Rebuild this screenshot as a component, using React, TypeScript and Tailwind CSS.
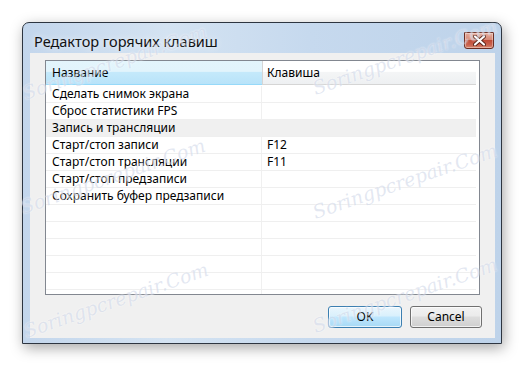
import React from 'react';

type Row = { name: string; key?: string; group?: boolean };

const rows: Row[] = [
  { name: 'Сделать снимок экрана' },
  { name: 'Сброс статистики FPS' },
  { name: 'Запись и трансляции', group: true },
  { name: 'Старт/стоп записи', key: 'F12' },
  { name: 'Старт/стоп трансляции', key: 'F11' },
  { name: 'Старт/стоп предзаписи' },
  { name: 'Сохранить буфер предзаписи' },
  { name: '' },
  { name: '' },
  { name: '' },
  { name: '' },
  { name: '' },
  { name: '' },
];

const CloseButton: React.FC = () => (
  <div className="w-[30px] h-[17px] rounded-b-[3px] border border-[#6b2d22] bg-[linear-gradient(to_bottom,#e3a899_0%,#d68a78_45%,#c04a35_50%,#c9634f_80%,#d98a70_100%)] flex items-center justify-center shadow-[inset_0_0_0_1px_rgba(255,255,255,0.35)]">
    <svg width="13" height="11" viewBox="0 0 13 11">
      <path d="M2 1.5 L11 9.5 M11 1.5 L2 9.5" stroke="#5a2418" strokeWidth="4" strokeLinecap="round" />
      <path d="M2 1.5 L11 9.5 M11 1.5 L2 9.5" stroke="#ffffff" strokeWidth="2.2" strokeLinecap="round" />
    </svg>
  </div>
);

// faint watermark printed over the screenshot
const Watermark: React.FC<{ className: string }> = ({ className }) => (
  <span
    className={`pointer-events-none absolute -translate-x-1/2 -translate-y-1/2 -rotate-[19deg] whitespace-nowrap font-['DejaVu_Serif',serif] italic text-[19px] text-[#aebbd8]/35 [text-shadow:0_0_2px_rgba(255,255,255,0.8)] ${className}`}
  >
    Soringpcrepair.Com
  </span>
);

const App: React.FC = () => {
  return (
    <div className="relative w-[524px] h-[368px] bg-white overflow-hidden pt-[22px] pl-[22px] font-['Noto_Sans',sans-serif] text-[12px] text-black">
      <div className="w-[480px] h-[322px] flex flex-col rounded-t-[7px] border border-[#2d3540] bg-[linear-gradient(to_right,#c3d6ec,#d4e3f2_30%,#c6d9ee_60%,#bed3ea)] shadow-[2px_4px_14px_rgba(0,0,0,0.35)]">
        {/* title bar */}
        <div className="h-[30px] flex items-start justify-between pl-[11px] pr-[7px]">
          <span className="mt-[10px] text-[14.5px] leading-[16px] text-[#111] [text-shadow:0_0_6px_rgba(255,255,255,0.9)]">
            Редактор горячих клавиш
          </span>
          <div className="mt-[9px]">
            <CloseButton />
          </div>
        </div>

        {/* client area */}
        <div className="flex-1 flex pr-[6px] pl-[7px] pb-[5px]">
          <div className="w-[465px] h-[285px] bg-[#f0f0f0] flex flex-col pt-[7px] pl-[15px]">
            <div className="w-[435px] h-[235px] border border-[#828790] bg-white overflow-hidden flex flex-col">
              <div className="h-[25px] flex shrink-0">
                <div className="w-[216px] h-[24px] flex items-center pl-[6px] border-b border-[#96d9f9] bg-[linear-gradient(to_bottom,#e3f5fc_0%,#e2f4fc_45%,#c4e9fb_50%,#b8e3f9_100%)]">
                  Название
                </div>
                <div className="w-px h-[24px] bg-[#d5d5d5]" />
                <div className="w-[213px] h-[24px] flex items-center pl-[4px] border-b border-[#d5d5d5] bg-[linear-gradient(to_bottom,#ffffff_0%,#ffffff_45%,#f4f5f6_50%,#eef0f2_100%)]">
                  Клавиша
                </div>
              </div>
              {rows.map((r, i) => (
                <div key={i} className="h-[17px] shrink-0 flex">
                  <div
                    className={`w-[430px] h-[17px] flex border-b border-[#efefef] ${r.group ? 'bg-[#f0f0f0]' : ''}`}
                  >
                    <div
                      className={`w-[216px] pl-[6px] leading-[16px] whitespace-nowrap ${r.group ? '' : 'border-r border-[#f0f0f0]'}`}
                    >
                      {r.name}
                    </div>
                    <div className="pl-[5px] leading-[16px]">{r.key}</div>
                  </div>
                </div>
              ))}
            </div>

            <div className="mt-[11px] flex justify-end gap-[8px] pr-[13px]">
              <button className="w-[74px] h-[22px] rounded-[3px] border border-[#3c7fb1] bg-[linear-gradient(to_bottom,#eaf6fd_0%,#d9f0fc_45%,#bee6fd_50%,#a7d9f5_100%)] shadow-[inset_0_0_0_1px_rgba(255,255,255,0.7)] text-[12px] text-black">
                OK
              </button>
              <button className="w-[72px] h-[22px] rounded-[3px] border border-[#707070] bg-[linear-gradient(to_bottom,#f2f2f2_0%,#ebebeb_45%,#dddddd_50%,#cfcfcf_100%)] shadow-[inset_0_0_0_1px_rgba(255,255,255,0.7)] text-[12px] text-black">
                Cancel
              </button>
            </div>
          </div>
        </div>
      </div>

      <Watermark className="left-[115px] top-[62px]" />
      <Watermark className="left-[113px] top-[176px]" />
      <Watermark className="left-[116px] top-[300px]" />
      <Watermark className="left-[405px] top-[57px]" />
      <Watermark className="left-[405px] top-[181px]" />
      <Watermark className="left-[405px] top-[295px]" />
    </div>
  );
};

export default App;
